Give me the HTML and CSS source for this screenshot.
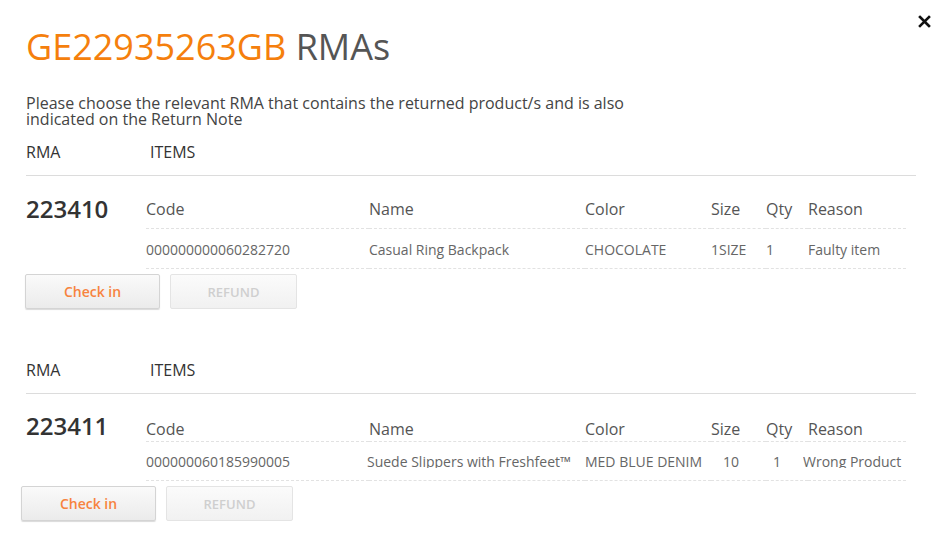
FILE: index.html
```
<!DOCTYPE html>
<html lang="en">
<head>
    <meta charset="UTF-8">
    <title>RMAs</title>
    <link rel="stylesheet" href="styles.css">
</head>
<body>
<div class="modal">
    <a href="javascript://" class="close">
        <svg width="13" height="13" viewBox="0 0 13 13"><path d="M2 2 L11 11 M11 2 L2 11" stroke="#111" stroke-width="2.6" stroke-linecap="square"/></svg>
    </a>
    <h1><span class="ref">GE22935263GB</span> RMAs</h1>
    <p class="lead">Please choose the relevant RMA that contains the returned product/s and is also indicated on the Return Note</p>

    <div class="rma">
        <div class="rma-head">
            <span class="col-rma">RMA</span>
            <span>ITEMS</span>
        </div>
        <div class="rma-body">
            <div class="rma-no">223410</div>
            <table class="items">
                <tr>
                    <th class="c-code">Code</th>
                    <th class="c-name">Name</th>
                    <th class="c-color">Color</th>
                    <th class="c-size">Size</th>
                    <th class="c-qty">Qty</th>
                    <th class="c-reason">Reason</th>
                </tr>
                <tr>
                    <td>000000000060282720</td>
                    <td>Casual Ring Backpack</td>
                    <td>CHOCOLATE</td>
                    <td>1SIZE</td>
                    <td>1</td>
                    <td>Faulty item</td>
                </tr>
            </table>
        </div>
        <div class="actions">
            <button class="btn btn-check">Check in</button>
            <button class="btn btn-refund" disabled>REFUND</button>
        </div>
    </div>

    <div class="rma second">
        <div class="rma-head">
            <span class="col-rma">RMA</span>
            <span>ITEMS</span>
        </div>
        <div class="rma-body">
            <div class="rma-no">223411</div>
            <table class="items">
                <tr>
                    <th class="c-code">Code</th>
                    <th class="c-name">Name</th>
                    <th class="c-color">Color</th>
                    <th class="c-size">Size</th>
                    <th class="c-qty">Qty</th>
                    <th class="c-reason">Reason</th>
                </tr>
                <tr>
                    <td><div class="cell">000000060185990005</div></td>
                    <td><div class="cell pull">Suede Slippers with Freshfeet™</div></td>
                    <td><div class="cell">MED BLUE DENIM</div></td>
                    <td><div class="cell size">10</div></td>
                    <td><div class="cell qty">1</div></td>
                    <td><div class="cell reason">Wrong Product</div></td>
                </tr>
            </table>
        </div>
        <div class="actions">
            <button class="btn btn-check">Check in</button>
            <button class="btn btn-refund" disabled>REFUND</button>
        </div>
    </div>
</div>
</body>
</html>
```

FILE: styles.css
```
html,body,div,h1,p,table,tr,td,th,span,a,button{
    margin: 0;
    padding: 0;
}
body{
    background-color: #fff;
    font-family: "Open Sans", "Liberation Sans", sans-serif;
    color: #444;
}
.modal{
    position: relative;
    width: 939px;
    height: 550px;
    box-sizing: border-box;
    padding: 22px 23px 0 26px;
    overflow: hidden;
}
.close{
    position: absolute;
    top: 15px;
    right: 8px;
    display: block;
    line-height: 0;
}
h1{
    font-size: 36px;
    font-weight: normal;
    line-height: 50px;
    color: #555;
}
h1 .ref{
    color: #f57f0d;
}
.lead{
    width: 640px;
    margin-top: 23px;
    font-size: 16px;
    line-height: 16px;
    color: #444;
}
.rma-head{
    display: flex;
    padding: 14px 0 12px;
    border-bottom: 1px solid #dcdcdc;
    font-size: 16px;
    font-weight: 500;
    color: #333;
}
.rma-head span{
    line-height: 22px;
}
.col-rma{
    width: 124px;
}
.rma-body{
    display: flex;
}
.rma-no{
    width: 120px;
    padding-top: 18px;
    font-size: 24px;
    font-weight: 600;
    line-height: 30px;
    color: #333;
}
.items{
    border-collapse: collapse;
}
.items th{
    padding: 22px 0 8px;
    line-height: 22px;
    vertical-align: top;
    text-align: left;
    font-size: 16px;
    font-weight: normal;
    color: #555;
    border-bottom: 1px dashed #e2e2e2;
}
.items td{
    padding: 11px 0 8px;
    line-height: 20px;
    vertical-align: top;
    white-space: nowrap;
    font-size: 14px;
    color: #666;
    border-bottom: 1px dashed #e2e2e2;
}
.c-code{ width: 223px; }
.c-name{ width: 216px; }
.c-color{ width: 126px; }
.c-size{ width: 55px; }
.c-qty{ width: 42px; }
.c-reason{ width: 98px; }
.actions{
    display: flex;
    gap: 10px;
    margin-top: 5px;
}
.btn{
    height: 35px;
    font-family: "Open Sans", "Liberation Sans", sans-serif;
    border: 1px solid #d4d4d4;
    border-radius: 2px;
    background: linear-gradient(#fafafa, #ebebeb);
    cursor: pointer;
}
.btn-check{
    width: 135px;
    margin-left: -1px;
    font-size: 14px;
    font-weight: 600;
    color: #f7833e;
    box-shadow: 0 1px 1px rgba(0,0,0,0.15);
}
.btn-refund{
    width: 127px;
    font-size: 13px;
    font-weight: 600;
    color: #cfcfcf;
    background: linear-gradient(#fbfbfb, #f1f1f1);
    border-color: #e4e4e4;
}
.second{
    margin-top: 36px;
}
.second .rma-no{
    padding-top: 17px;
}
.second .items th{
    padding: 24px 0 1px;
}
.second .items td{
    padding: 10px 0 12px;
}
.cell{
    height: 16px;
    line-height: 19px;
    overflow: hidden;
}
.cell.pull{
    margin-left: -2px;
}
.cell.size{
    padding-left: 12px;
}
.cell.qty{
    padding-left: 7px;
}
.cell.reason{
    margin-left: -5px;
}
.second .actions{
    margin-left: -4px;
}
```
